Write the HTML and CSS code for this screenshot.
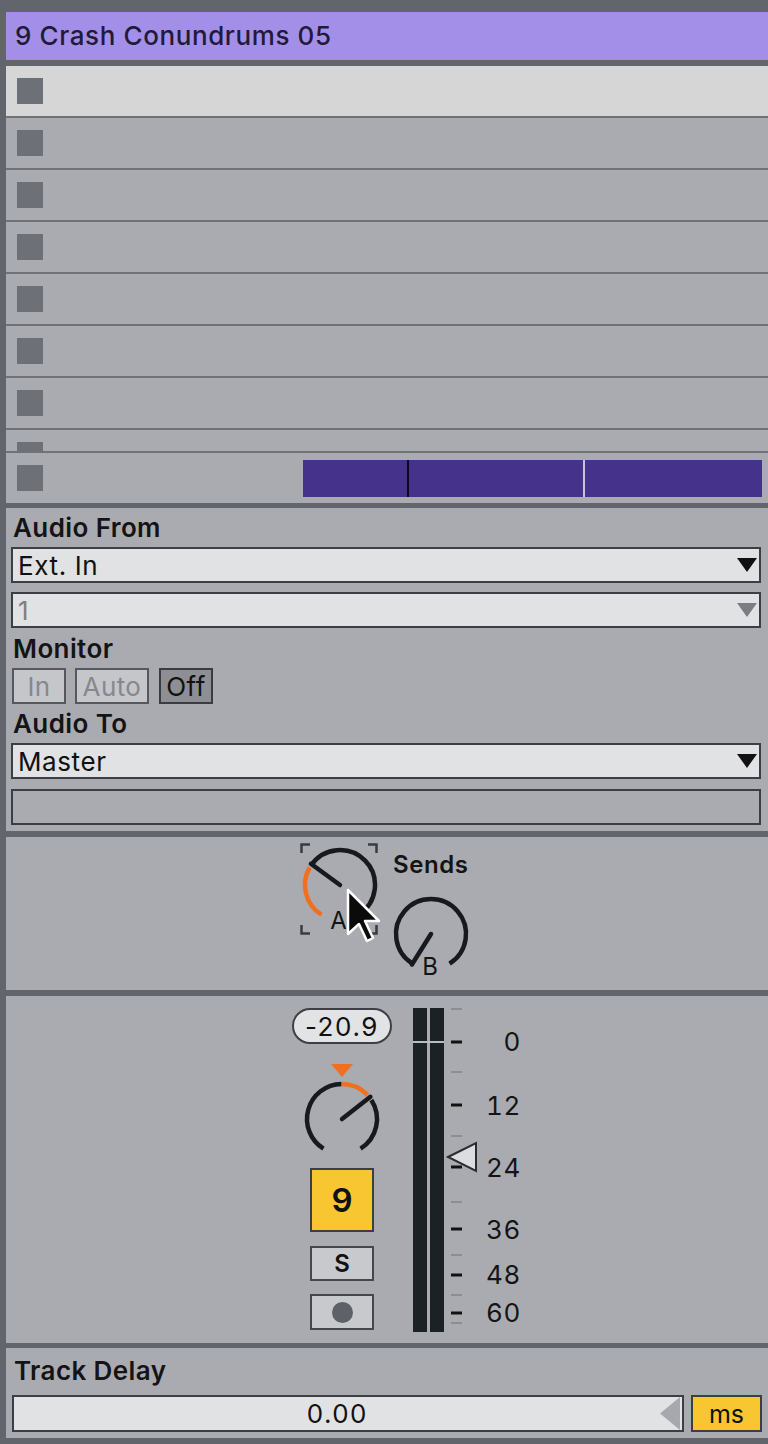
FILE: index.html
```html
<!DOCTYPE html>
<html>
<head>
<meta charset="utf-8">
<title>Track</title>
<link rel="stylesheet" href="styles.css">
</head>
<body>
<div class="strip">
  <div class="header">9 Crash Conundrums 05</div>

  <div class="clips">
    <div class="clip-list">
      <div class="slot selected"><span class="stop"></span></div>
      <div class="slot"><span class="stop"></span></div>
      <div class="slot"><span class="stop"></span></div>
      <div class="slot"><span class="stop"></span></div>
      <div class="slot"><span class="stop"></span></div>
      <div class="slot"><span class="stop"></span></div>
      <div class="slot"><span class="stop"></span></div>
      <div class="slot"><span class="stop"></span></div>
    </div>
    <div class="slot master-row">
      <span class="stop"></span>
      <div class="clipbar">
        <span class="seg seg1"></span>
        <span class="seg seg2"></span>
        <span class="seg seg3"></span>
      </div>
    </div>
  </div>

  <section class="io">
    <div class="label">Audio From</div>
    <div class="field gap9"><span class="field-text">Ext. In</span>
      <svg class="caret" width="20" height="14" viewBox="0 0 20 14"><polygon points="0,0 20,0 10,14" fill="#111"/></svg>
    </div>
    <div class="field gap6"><span class="field-text dim">1</span>
      <svg class="caret" width="20" height="14" viewBox="0 0 20 14"><polygon points="0,0 20,0 10,14" fill="#7b7d83"/></svg>
    </div>
    <div class="label">Monitor</div>
    <div class="monitor">
      <span class="mbtn w54">In</span>
      <span class="mbtn w74">Auto</span>
      <span class="mbtn w54 on">Off</span>
    </div>
    <div class="label">Audio To</div>
    <div class="field gap10"><span class="field-text">Master</span>
      <svg class="caret" width="20" height="14" viewBox="0 0 20 14"><polygon points="0,0 20,0 10,14" fill="#111"/></svg>
    </div>
    <div class="field empty"></div>
  </section>

  <section class="sends">
    <div class="knob-a">
      <svg width="78" height="92" viewBox="0 0 78 92">
        <g fill="none" stroke="#3a3c42" stroke-width="2.5">
          <path d="M1.5 10 V1.5 H10"/>
          <path d="M68 1.5 H76.5 V10"/>
          <path d="M1.5 82 V90.5 H10"/>
          <path d="M68 90.5 H76.5 V82"/>
        </g>
        <path d="M21.45 71.68 A35 35 0 0 1 9.69 24.5" fill="none" stroke="#f0701f" stroke-width="4.5"/>
        <path d="M10.98 22.43 A35 35 0 1 1 58.55 71.68" fill="none" stroke="#18191c" stroke-width="4.5"/>
        <line x1="40" y1="42" x2="10.9" y2="20.8" stroke="#18191c" stroke-width="4.5" stroke-linecap="round"/>
      </svg>
      <span class="knob-label la">A</span>
      <svg class="cursor" width="38" height="58" viewBox="0 0 38 58">
        <path d="M2 2 L2 46 L13 36 L21 53 L27 50 L19 33 L33 33 Z" fill="#0b0b0b" stroke="#ffffff" stroke-width="2.5" stroke-linejoin="round"/>
      </svg>
    </div>
    <div class="sends-col">
      <div class="sends-title">Sends</div>
      <div class="knob-b">
        <svg width="80" height="80" viewBox="0 0 80 80">
          <path d="M21.45 69.68 A35 35 0 1 1 58.55 69.68" fill="none" stroke="#18191c" stroke-width="4.5"/>
          <line x1="40" y1="40" x2="20.9" y2="70.5" stroke="#18191c" stroke-width="4.5" stroke-linecap="round"/>
        </svg>
        <span class="knob-label lb">B</span>
      </div>
    </div>
  </section>

  <section class="mixer">
    <div class="mix-col">
      <div class="pill">-20.9</div>
      <svg class="vol" width="100" height="98" viewBox="0 0 100 98">
        <polygon points="39,4 61,4 50,17" fill="#f0701f"/>
        <path d="M31.45 88.68 A35 35 0 0 1 49.39 24.01" fill="none" stroke="#18191c" stroke-width="4.5"/>
        <path d="M50 24 A35 35 0 0 1 75.6 35.13" fill="none" stroke="#f0701f" stroke-width="4.5"/>
        <path d="M79.35 39.94 A35 35 0 0 1 68.55 88.68" fill="none" stroke="#18191c" stroke-width="4.5"/>
        <line x1="50" y1="59" x2="78.4" y2="36.8" stroke="#18191c" stroke-width="4.5" stroke-linecap="round"/>
      </svg>
      <div class="track-num">9</div>
      <div class="solo">S</div>
      <div class="arm"><span class="dot"></span></div>
    </div>
    <svg class="meter" width="49" height="326" viewBox="0 0 49 326">
      <rect x="0" y="0" width="14" height="324" fill="#1c2126"/>
      <rect x="17" y="0" width="14" height="324" fill="#1c2126"/>
      <rect x="0" y="33" width="31" height="2" fill="#b9bbc0"/>
      <g fill="#8c8e94">
        <rect x="38" y="0" width="11" height="2"/>
        <rect x="38" y="63" width="11" height="2"/>
        <rect x="38" y="127" width="11" height="2"/>
        <rect x="38" y="193" width="11" height="2"/>
        <rect x="38" y="246" width="11" height="2"/>
        <rect x="38" y="286" width="11" height="2"/>
        <rect x="38" y="314" width="11" height="2"/>
      </g>
      <g fill="#121212">
        <rect x="38" y="32.5" width="11" height="3"/>
        <rect x="38" y="95.5" width="11" height="3"/>
        <rect x="38" y="157.5" width="11" height="3"/>
        <rect x="38" y="219.5" width="11" height="3"/>
        <rect x="38" y="265.5" width="11" height="3"/>
        <rect x="38" y="303.5" width="11" height="3"/>
      </g>
      <polygon points="35,149 63,135 63,163" fill="#dcdde0" stroke="#2a2c30" stroke-width="2" stroke-linejoin="miter"/>
    </svg>
    <div class="scale">
      <span class="db" style="top:21px">0</span>
      <span class="db" style="top:85px">12</span>
      <span class="db" style="top:147px">24</span>
      <span class="db" style="top:209px">36</span>
      <span class="db" style="top:254px">48</span>
      <span class="db" style="top:292px">60</span>
    </div>
  </section>

  <section class="delay">
    <div class="label">Track Delay</div>
    <div class="delay-row">
      <div class="delay-field">
        <span class="delay-value">0.00</span>
        <svg class="delay-tri" width="20" height="33" viewBox="0 0 20 33"><polygon points="0,16.5 20,0 20,33" fill="#a6a8ae"/></svg>
      </div>
      <div class="unit">ms</div>
    </div>
  </section>
</div>
</body>
</html>
```

FILE: styles.css
```css
* { box-sizing: border-box; }

html, body {
  margin: 0;
  padding: 0;
}

body {
  background: #62656c;
  font-family: "Inter", "Liberation Sans", sans-serif;
  color: #141414;
  width: 768px;
  height: 1444px;
  overflow: hidden;
}

.strip {
  padding: 12px 0 6px 6px;
  display: flex;
  flex-direction: column;
}

.header {
  height: 48px;
  background: #a48fe8;
  color: #211a38;
  font-size: 26px;
  font-weight: 500;
  letter-spacing: 0.6px;
  line-height: 48px;
  padding-left: 9px;
  margin-bottom: 6px;
}

/* clip slots */
.clips {
  display: flex;
  flex-direction: column;
  margin-bottom: 5px;
}

.clip-list {
  height: 385px;
  overflow: hidden;
}

.slot {
  height: 52px;
  background: #a9abb1;
  border-bottom: 2px solid #6f7279;
  display: flex;
  align-items: flex-start;
  padding: 12px 0 0 11px;
}

.slot.selected {
  background: #d6d6d7;
}

.stop {
  width: 26px;
  height: 26px;
  background: #6e7078;
  flex: none;
}

.master-row {
  height: 52px;
  border-bottom: none;
  border-top: 2px solid #6f7279;
  align-items: center;
  padding: 0 6px 0 11px;
}

.clipbar {
  margin-left: auto;
  width: 459px;
  height: 37px;
  display: flex;
  background: #45328b;
}

.seg { height: 100%; display: block; }
.seg1 { width: 106px; border-right: 2px solid #0c0a16; }
.seg2 { width: 176px; border-right: 2px solid #c6c2dc; }
.seg3 { flex: 1; }

/* I/O section */
.io {
  background: #a9abb1;
  padding: 5px 7px 6px 5px;
  display: flex;
  flex-direction: column;
  margin-bottom: 6px;
}

.label {
  height: 30px;
  line-height: 30px;
  font-size: 26px;
  font-weight: 600;
  letter-spacing: 0.4px;
  padding-left: 2px;
  margin-bottom: 4px;
  color: #141414;
}

.field {
  height: 36px;
  background: #e1e2e4;
  border: 2px solid #3c3e43;
  display: flex;
  align-items: center;
  padding: 0 2px 0 5px;
}

.field-text {
  font-size: 26px;
  letter-spacing: 0.6px;
  flex: 1;
  color: #111;
}

.field-text.dim { color: #7d7f85; }

.caret { flex: none; }

.gap9 { margin-bottom: 9px; }
.gap6 { margin-bottom: 6px; }
.gap10 { margin-bottom: 10px; }

.field.empty {
  background: #a9abb1;
}

.monitor {
  display: flex;
  gap: 9px;
  height: 36px;
  margin-bottom: 5px;
  padding-left: 1px;
}

.mbtn {
  height: 36px;
  border: 2px solid #56585e;
  background: #c5c6ca;
  color: #86888e;
  font-size: 26px;
  letter-spacing: 0.4px;
  display: flex;
  align-items: center;
  justify-content: center;
}

.w54 { width: 54px; }
.w74 { width: 74px; }

.mbtn.on {
  background: #8d8f95;
  border-color: #3a3c41;
  color: #121212;
  margin-left: 1px;
}

/* sends */
.sends {
  height: 153px;
  background: #a9abb1;
  margin-bottom: 6px;
  display: flex;
  align-items: flex-start;
  padding: 6px 0 0 294px;
}

.knob-a {
  position: relative;
  width: 78px;
  height: 92px;
}

.knob-a svg { display: block; }

.knob-label {
  position: absolute;
  font-size: 24px;
  line-height: 24px;
  color: #141414;
  transform: translateX(-50%);
}

.la { left: 38.5px; top: 66px; }

.cursor {
  position: absolute;
  left: 46px;
  top: 45px;
}

.sends-col {
  margin-left: 15px;
  display: flex;
  flex-direction: column;
}

.sends-title {
  font-size: 24px;
  font-weight: 600;
  letter-spacing: 0.6px;
  line-height: 26px;
  margin-top: 9px;
  color: #141414;
}

.knob-b {
  position: relative;
  width: 80px;
  height: 88px;
  margin-top: 16px;
  margin-left: -2px;
}

.knob-b svg { display: block; }

.lb { left: 39px; top: 61px; }

/* mixer */
.mixer {
  height: 347px;
  background: #a9abb1;
  margin-bottom: 5px;
  display: flex;
  align-items: flex-start;
  padding: 12px 0 0 286px;
}

.mix-col {
  width: 100px;
  display: flex;
  flex-direction: column;
  align-items: center;
}

.pill {
  width: 100px;
  height: 36px;
  border: 2px solid #3d3f44;
  border-radius: 18px;
  background: #e2e3e5;
  font-size: 26px;
  letter-spacing: 1.6px;
  display: flex;
  align-items: center;
  justify-content: center;
  color: #111;
}

.vol {
  display: block;
  margin-top: 16px;
}

.track-num {
  margin-top: 10px;
  width: 64px;
  height: 64px;
  background: #f7c630;
  border: 2px solid #3c3e43;
  font-size: 33px;
  font-weight: 600;
  display: flex;
  align-items: center;
  justify-content: center;
  color: #111;
}

.solo {
  margin-top: 14px;
  width: 64px;
  height: 35px;
  background: #c8c9cd;
  border: 2px solid #45474c;
  font-size: 24px;
  font-weight: 600;
  display: flex;
  align-items: center;
  justify-content: center;
  color: #111;
}

.arm {
  margin-top: 13px;
  width: 64px;
  height: 36px;
  background: #c8c9cd;
  border: 2px solid #45474c;
  display: flex;
  align-items: center;
  justify-content: center;
}

.dot {
  width: 21px;
  height: 21px;
  border-radius: 50%;
  background: #5f6168;
}

.meter {
  display: block;
  margin-left: 21px;
  overflow: visible;
}

.scale {
  position: relative;
  width: 60px;
  height: 326px;
}

.db {
  position: absolute;
  right: 1px;
  font-size: 26px;
  font-variant-numeric: tabular-nums;
  letter-spacing: 0.6px;
  line-height: 26px;
  color: #141414;
}

/* track delay */
.delay {
  height: 90px;
  background: #a9abb1;
  padding: 8px 6px 6px 6px;
  display: flex;
  flex-direction: column;
}

.delay .label {
  margin-bottom: 9px;
}

.delay-row {
  display: flex;
  gap: 7px;
  height: 37px;
}

.delay-field {
  flex: 1;
  background: #e1e2e4;
  border: 2px solid #3c3e43;
  display: flex;
  align-items: stretch;
}

.delay-value {
  flex: 1;
  font-size: 26px;
  font-variant-numeric: tabular-nums;
  letter-spacing: 0.8px;
  display: flex;
  align-items: center;
  justify-content: center;
  color: #111;
}

.delay-tri {
  flex: none;
  display: block;
  margin-right: 2px;
}

.unit {
  width: 71px;
  background: #f7c630;
  border: 2px solid #3c3e43;
  font-size: 25px;
  display: flex;
  align-items: center;
  justify-content: center;
  color: #111;
}
```
